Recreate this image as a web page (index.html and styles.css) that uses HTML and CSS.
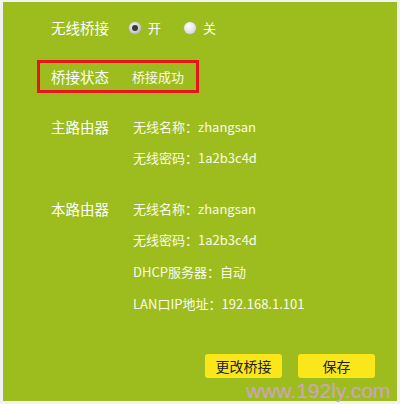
FILE: index.html
```html
<!DOCTYPE html>
<html lang="zh-CN">
<head>
<meta charset="utf-8">
<title>无线桥接</title>
<link rel="stylesheet" href="styles.css">
</head>
<body>
<div class="frame">
  <div class="panel">
    <div class="row switch-row">
      <span class="label">无线桥接</span>
      <span class="radios">
        <span class="radio checked"></span><span class="opt">开</span>
        <span class="radio"></span><span class="opt">关</span>
      </span>
    </div>
    <div class="status-box">
      <span class="label">桥接状态</span>
      <span class="value status">桥接成功</span>
    </div>
    <div class="section main-router">
      <div class="row"><span class="label">主路由器</span><span class="value">无线名称<span class="colon">：</span>zhangsan</span></div>
      <div class="row"><span class="label"></span><span class="value">无线密码<span class="colon">：</span>1a2b3c4d</span></div>
    </div>
    <div class="section this-router">
      <div class="row"><span class="label">本路由器</span><span class="value">无线名称<span class="colon">：</span>zhangsan</span></div>
      <div class="row"><span class="label"></span><span class="value">无线密码<span class="colon">：</span>1a2b3c4d</span></div>
      <div class="row"><span class="label"></span><span class="value">DHCP服务器<span class="colon">：</span>自动</span></div>
      <div class="row"><span class="label"></span><span class="value">LAN口IP地址<span class="colon">：</span>192.168.1.101</span></div>
    </div>
    <div class="buttons">
      <button class="btn">更改桥接</button>
      <button class="btn">保存</button>
    </div>
    <div class="watermark">www.192ly.com</div>
  </div>
</div>
</body>
</html>
```

FILE: styles.css
```css
html, body {
  margin: 0;
  padding: 0;
  background: #ffffff;
}
body {
  width: 400px;
  height: 404px;
  font-family: "Noto Sans CJK SC", "Liberation Sans", sans-serif;
}
.frame {
  padding: 2px 3px 3px 3px;
  background: #f2f2f2;
  height: 404px;
  box-sizing: border-box;
}
.panel {
  position: relative;
  background: #9dbd1e;
  height: 399px;
  box-sizing: border-box;
  padding-top: 10px;
  color: #ffffff;
}
.row {
  display: flex;
  align-items: center;
  height: 31px;
  padding-left: 48px;
}
.label {
  width: 82px;
  font-size: 14.5px;
  font-weight: normal;
  color: #ffffff;
  flex: none;
}
.value {
  font-size: 13px;
  color: #fbfbe8;
}
.colon {
  font-family: "Noto Sans CJK TC", sans-serif;
}
.radios {
  display: flex;
  align-items: center;
  margin-left: -4px;
}
.radio {
  width: 12px;
  height: 12px;
  border-radius: 50%;
  background: radial-gradient(circle at 40% 35%, #ffffff 0%, #e6e6e6 50%, #c4c4c4 100%);
  box-shadow: 0 0 0 0.5px #b0b0b0;
  position: relative;
}
.radio.checked {
  background: radial-gradient(circle at 40% 35%, #f4f4f4 0%, #d0d0d0 55%, #9a9a9a 100%);
}
.radio.checked::after {
  content: "";
  position: absolute;
  left: 3px;
  top: 3px;
  width: 6px;
  height: 6px;
  border-radius: 50%;
  background: #3a3a3a;
}
.opt {
  font-size: 13px;
  margin-left: 7px;
  margin-right: 23px;
}
.status-box {
  margin: 17px 0 0 34px;
  width: 162px;
  height: 33px;
  box-sizing: border-box;
  border: 3px solid #e8141c;
  display: flex;
  align-items: center;
  padding-left: 11px;
}
.status-box .label {
  width: 81px;
}
.status {
  font-size: 13px;
}
.main-router {
  margin-top: 18px;
}
.this-router {
  margin-top: 20px;
}
.this-router .row:nth-child(3) {
  margin-top: 1px;
}
.this-router .row:nth-child(4) {
  margin-top: 1px;
}
.buttons {
  display: flex;
  justify-content: flex-end;
  gap: 16px;
  padding-right: 22px;
  margin-top: 35px;
}
.btn {
  width: 77px;
  height: 24px;
  border: none;
  border-radius: 3px;
  background: #f9e71b;
  color: #222222;
  font-family: "Noto Sans CJK SC", sans-serif;
  font-size: 14px;
  padding: 0;
}
.watermark {
  position: absolute;
  left: 243px;
  top: 378px;
  font-family: "Liberation Sans", Arial, sans-serif;
  font-size: 21px;
  line-height: 22px;
  color: #cfa3c9;
}
```
